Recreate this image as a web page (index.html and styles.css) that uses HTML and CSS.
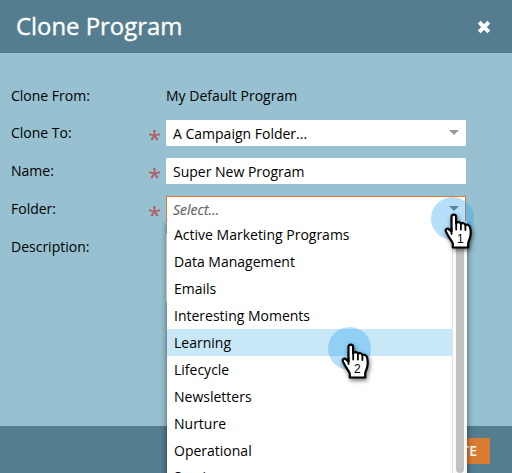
FILE: index.html
```html
<!DOCTYPE html>
<html lang="en">
<head>
<meta charset="utf-8">
<title>Clone Program</title>
<link rel="stylesheet" href="styles.css">
</head>
<body>
<svg class="defs" aria-hidden="true">
  <symbol id="hand" viewBox="0 0 30 38">
    <path d="M7.500 18.500V4.200c0-3.300 4.600-3.300 4.600 0v6c1-1.600 4.300-1.400 4.800.6 1.200-1.200 4-.8 4.500 1.200 1.300-.8 4 0 4.600 2.200.8 3 .8 7 .2 9.800-.4 2-1.700 4-2 6.500V34.500H8.800v-4C7.800 27.500 4.600 24.500 2 18.600c-1.100-2.700 1.500-3.900 3-2.300z" fill="#fff" stroke="#000" stroke-width="2.200" stroke-linejoin="round"/>
    <path d="M7.500 15v6M12.200 9v7.500M16.900 11v5.500M21.400 12.500v4.500" fill="none" stroke="#000" stroke-width="1.800" stroke-linecap="round"/>
  </symbol>
</svg>
<div class="dialog">
  <header class="header"><h1>Clone Program</h1>
    <svg class="close" viewBox="0 0 14 14"><path d="M2.200 2.200l9.600 9.600M11.800 2.200l-9.600 9.600"/></svg>
  </header>
  <main class="form">
    <div class="row"><label class="low">Clone From:</label><span class="star"></span><span class="value">My Default Program</span></div>
    <div class="row"><label>Clone To:</label><span class="star">*</span><div class="field">A Campaign Folder...<i class="arrow"></i></div></div>
    <div class="row"><label>Name:</label><span class="star">*</span><div class="field">Super New Program</div></div>
    <div class="row"><label>Folder:</label><span class="star">*</span>
      <div class="field active"><em>Select...</em><i class="arrow dark"></i>
        <div class="menu">
          <ul>
            <li>Active Marketing Programs</li><li>Data Management</li><li>Emails</li><li>Interesting Moments</li><li class="on">Learning</li><li>Lifecycle</li><li>Newsletters</li><li>Nurture</li><li>Operational</li><li>Scoring</li>
          </ul>
          <div class="track"><div class="thumb"></div></div>
        </div>
      </div>
    </div>
    <div class="row"><label>Description:</label><span class="star"></span><div class="field tall"></div></div>
  </main>
  <footer class="footer"><button>CREATE</button></footer>
</div>
<div class="pointer one"><svg><use href="#hand"/></svg><b>1</b></div>
<div class="pointer two"><svg><use href="#hand"/></svg><b>2</b></div>
</body>
</html>
```
FILE: styles.css
```css
* { box-sizing: border-box; }
body { margin: 0; overflow: hidden; font: 14px/20px "Open Sans", "Noto Sans", sans-serif; color: #000; }
.defs { position: absolute; width: 0; height: 0; }
.dialog { width: 512px; height: 473px; display: flex; flex-direction: column; overflow: hidden; background: #97c0d0; }
.header { height: 53px; flex: none; display: flex; align-items: center; justify-content: space-between; padding: 0 21px 0 16px; background: #547d8f; }
h1 { margin: 0; padding-bottom: 2px; font-size: 23.9px; line-height: 32px; font-weight: 400; color: #fff; -webkit-text-stroke: .35px #fff; }
.close { width: 14px; height: 14px; }
.close path { stroke: #fff; stroke-width: 4; fill: none; }
.form { flex: 1; display: flex; flex-direction: column; gap: 12px; padding: 29px 46px 0 11px; }
.row { height: 26px; flex: none; display: flex; }
.row label { width: 137px; line-height: 26px; }
.row label.low, .value { line-height: 28px; }
.star { width: 18px; font-size: 24px; line-height: 37px; color: #b5575a; }
.field { position: relative; width: 300px; height: 26px; padding: 0 7px; line-height: 28px; background: #fff; }
.field.active { padding: 0 6px; border: 1px solid #dc7b33; border-bottom: 0; line-height: 26px; }
.field.tall { height: 68px; }
em { color: #666; -webkit-text-stroke: .2px #666; }
.arrow { position: absolute; right: 7px; top: 10px; border: 5px solid transparent; border-top-color: #999; border-bottom: 0; }
.arrow.dark { right: 6px; top: 9px; border-top-color: #777; }
.menu { position: absolute; z-index: 2; left: 0; top: 24px; width: 300px; height: 270px; display: flex; background: #fff; box-shadow: 0 2px 6px rgba(0,0,0,.55); clip-path: inset(0 -8px -8px -8px); }
ul { flex: 1; margin: 0; padding: 0; list-style: none; }
li { height: 27px; padding-left: 7px; line-height: 28px; }
li:last-child { line-height: 26px; }
li.on { background: #c8e7f7; }
.track { width: 15px; border-left: 1px solid #e4e4e4; background: #fafafa; padding: 3px 3px 0; }
.thumb { width: 8px; height: 249px; border-radius: 4px; background: #c1c1c1; }
.footer { height: 47px; flex: none; display: flex; justify-content: flex-end; padding: 12px 22px 0 0; background: #547d8f; }
.footer button { height: 26px; padding: 0 13px; border: 0; background: #da7b34; color: #fff; font: 600 14px/26px "Open Sans", sans-serif; }
.pointer { position: absolute; z-index: 3; width: 43px; height: 43px; border-radius: 50%; background: rgba(38,160,239,.34); }
.one { left: 431px; top: 197px; }
.two { left: 328px; top: 327px; }
.pointer svg { position: absolute; left: 13px; top: 16px; width: 30px; height: 38px; overflow: visible; filter: drop-shadow(1px 2px 2px rgba(0,0,0,.55)); }
.pointer b { position: absolute; left: 26px; top: 34px; font: 12px/16px "Liberation Sans", sans-serif; }
```
